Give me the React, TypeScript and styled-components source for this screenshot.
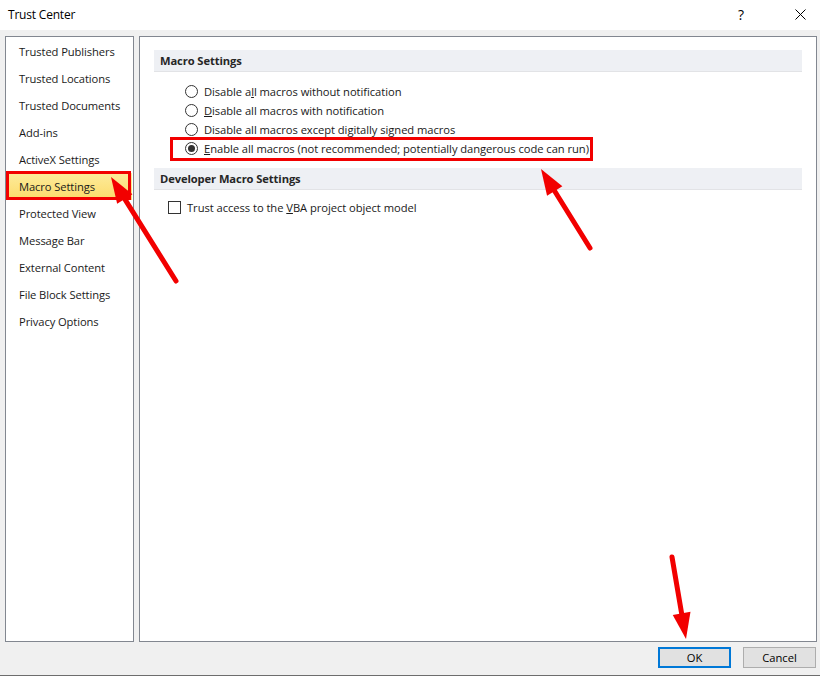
import React from "react";
import styled, { createGlobalStyle } from "styled-components";

const Global = createGlobalStyle`
  html, body { margin: 0; padding: 0; background: #f0f0f0; }
  body { font-family: "Open Sans", "Noto Sans", sans-serif; font-size: 12px; color: #000; }
`;

const Window = styled.div`
  position: relative;
  width: 820px;
  height: 676px;
  box-sizing: border-box;
  background: #f0f0f0;
  border-bottom: 1px solid #6d6d6d;
  display: flex;
  flex-direction: column;
  overflow: hidden;
`;

const TitleBar = styled.div`
  height: 30px;
  background: #fff;
  display: flex;
  align-items: center;
  padding: 0 0 2px 8px;
  box-sizing: border-box;
`;

const Title = styled.div`
  flex: 1;
  font-size: 12px;
  letter-spacing: -0.2px;
`;

const TitleButton = styled.div<{ $w: number; $mr?: number }>`
  width: ${(p) => p.$w}px;
  margin-right: ${(p) => p.$mr ?? 0}px;
  height: 28px;
  display: flex;
  align-items: center;
  justify-content: center;
  font-size: 14px;
  color: #000;
`;

const Body = styled.div`
  display: flex;
  gap: 5px;
  padding: 6px 3px 0 5px;
  height: 606px;
`;

const Panel = styled.div<{ $w?: number }>`
  box-sizing: border-box;
  border: 1px solid #828790;
  background: #fff;
  height: 606px;
  ${(p) => (p.$w ? `width: ${p.$w}px;` : "flex: 1;")}
`;

const NavList = styled.div`
  display: flex;
  flex-direction: column;
  padding: 1px 1px 0 1px;
`;

const NavItem = styled.div<{ $active?: boolean }>`
  position: relative;
  height: 27px;
  display: flex;
  align-items: center;
  padding-left: 12px;
  font-size: 11.2px;
  color: #1a1a1a;
  letter-spacing: -0.1px;
  ${(p) =>
    p.$active
      ? `
    background: linear-gradient(#fdeb9b, #fcdb6a);
    &::after {
      content: "";
      position: absolute;
      left: -1px; top: -2px; right: 1px; bottom: 0;
      border: 3px solid #f20000;
      box-sizing: border-box;
    }
  `
      : ""}
`;

const Content = styled.div`
  padding: 13px 14px 0 14px;
  display: flex;
  flex-direction: column;
`;

const SectionHeader = styled.div`
  height: 22px;
  box-sizing: border-box;
  background: #eef0f4;
  border-bottom: 1px solid #e2e3e6;
  display: flex;
  align-items: center;
  padding: 0 0 1px 6px;
  font-weight: 700;
  font-size: 11.2px;
  color: #262626;
  letter-spacing: -0.1px;
`;

const OptionList = styled.div<{ $indent: number; $top: number; $bottom: number }>`
  display: flex;
  flex-direction: column;
  padding: ${(p) => p.$top}px 0 ${(p) => p.$bottom}px ${(p) => p.$indent}px;
`;

const OptionRow = styled.label<{ $marked?: boolean }>`
  position: relative;
  height: 19px;
  display: flex;
  align-items: center;
  gap: 6px;
  font-size: 11.2px;
  color: #1a1a1a;
  letter-spacing: -0.05px;
  align-self: flex-start;
  ${(p) =>
    p.$marked
      ? `
    &::after {
      content: "";
      position: absolute;
      left: -15px; top: -2px; width: 423px; height: 24px;
      border: 3px solid #f20000;
      box-sizing: border-box;
    }
  `
      : ""}
`;

const Radio = styled.span<{ $checked?: boolean }>`
  width: 13px;
  height: 13px;
  box-sizing: border-box;
  border: 1px solid #333;
  border-radius: 50%;
  background: #fff;
  display: flex;
  align-items: center;
  justify-content: center;
  &::before {
    content: "";
    width: 7px;
    height: 7px;
    border-radius: 50%;
    background: ${(p) => (p.$checked ? "#333" : "transparent")};
  }
`;

const Checkbox = styled.span`
  width: 13px;
  height: 13px;
  box-sizing: border-box;
  border: 1px solid #333;
  background: #fff;
`;

const Footer = styled.div`
  flex: 1;
  display: flex;
  justify-content: flex-end;
  align-items: flex-start;
  gap: 12px;
  padding: 5px 4px 0 0;
`;

const Button = styled.button<{ $default?: boolean }>`
  width: 73px;
  height: 21px;
  box-sizing: border-box;
  background: #e1e1e1;
  border: ${(p) => (p.$default ? "2px solid #0078d7" : "1px solid #adadad")};
  font-family: "Open Sans", "Noto Sans", sans-serif;
  font-size: 11.2px;
  color: #000;
  padding: 0;
`;

const Arrows = styled.svg`
  position: absolute;
  left: 0;
  top: 0;
  pointer-events: none;
`;

function Arrow({ x1, y1, x2, y2 }: { x1: number; y1: number; x2: number; y2: number }) {
  const dx = x2 - x1;
  const dy = y2 - y1;
  const len = Math.hypot(dx, dy);
  const ux = dx / len;
  const uy = dy / len;
  const head = 26;
  const half = 9;
  const bx = x2 - ux * head;
  const by = y2 - uy * head;
  const px = -uy;
  const py = ux;
  return (
    <g>
      <line x1={x1} y1={y1} x2={bx + ux * 4} y2={by + uy * 4} stroke="#f20000" strokeWidth={5} strokeLinecap="round" />
      <polygon
        points={`${x2},${y2} ${bx + px * half},${by + py * half} ${bx - px * half},${by - py * half}`}
        fill="#f20000"
      />
    </g>
  );
}

const navItems = [
  "Trusted Publishers",
  "Trusted Locations",
  "Trusted Documents",
  "Add-ins",
  "ActiveX Settings",
  "Macro Settings",
  "Protected View",
  "Message Bar",
  "External Content",
  "File Block Settings",
  "Privacy Options",
];

export default function App() {
  return (
    <>
      <Global />
      <Window>
        <TitleBar>
          <Title>Trust Center</Title>
          <TitleButton $w={30} $mr={24}>?</TitleButton>
          <TitleButton $w={40}>
            <svg width="11" height="11" viewBox="0 0 11 11">
              <path d="M0.5 0.5 L10.5 10.5 M10.5 0.5 L0.5 10.5" stroke="#000" strokeWidth="1" />
            </svg>
          </TitleButton>
        </TitleBar>
        <Body>
          <Panel $w={129}>
            <NavList>
              {navItems.map((n) => (
                <NavItem key={n} $active={n === "Macro Settings"}>
                  {n}
                </NavItem>
              ))}
            </NavList>
          </Panel>
          <Panel>
            <Content>
              <SectionHeader>Macro Settings</SectionHeader>
              <OptionList $indent={31} $top={10} $bottom={10}>
                <OptionRow>
                  <Radio />
                  <span>
                    Disable a<u>l</u>l macros without notification
                  </span>
                </OptionRow>
                <OptionRow>
                  <Radio />
                  <span>
                    <u>D</u>isable all macros with notification
                  </span>
                </OptionRow>
                <OptionRow>
                  <Radio />
                  <span>Disable all macros except digitally signed macros</span>
                </OptionRow>
                <OptionRow $marked>
                  <Radio $checked />
                  <span>
                    <u>E</u>nable all macros (not recommended; potentially dangerous code can run)
                  </span>
                </OptionRow>
              </OptionList>
              <SectionHeader>Developer Macro Settings</SectionHeader>
              <OptionList $indent={14} $top={8} $bottom={0}>
                <OptionRow>
                  <Checkbox />
                  <span>
                    Trust access to the <u>V</u>BA project object model
                  </span>
                </OptionRow>
              </OptionList>
            </Content>
          </Panel>
        </Body>
        <Footer>
          <Button $default>OK</Button>
          <Button>Cancel</Button>
        </Footer>
        <Arrows width="820" height="676" viewBox="0 0 820 676">
          <Arrow x1={176} y1={281} x2={111} y2={177} />
          <Arrow x1={590} y1={248} x2={541} y2={169} />
          <Arrow x1={672} y1={557} x2={686} y2={639} />
        </Arrows>
      </Window>
    </>
  );
}
